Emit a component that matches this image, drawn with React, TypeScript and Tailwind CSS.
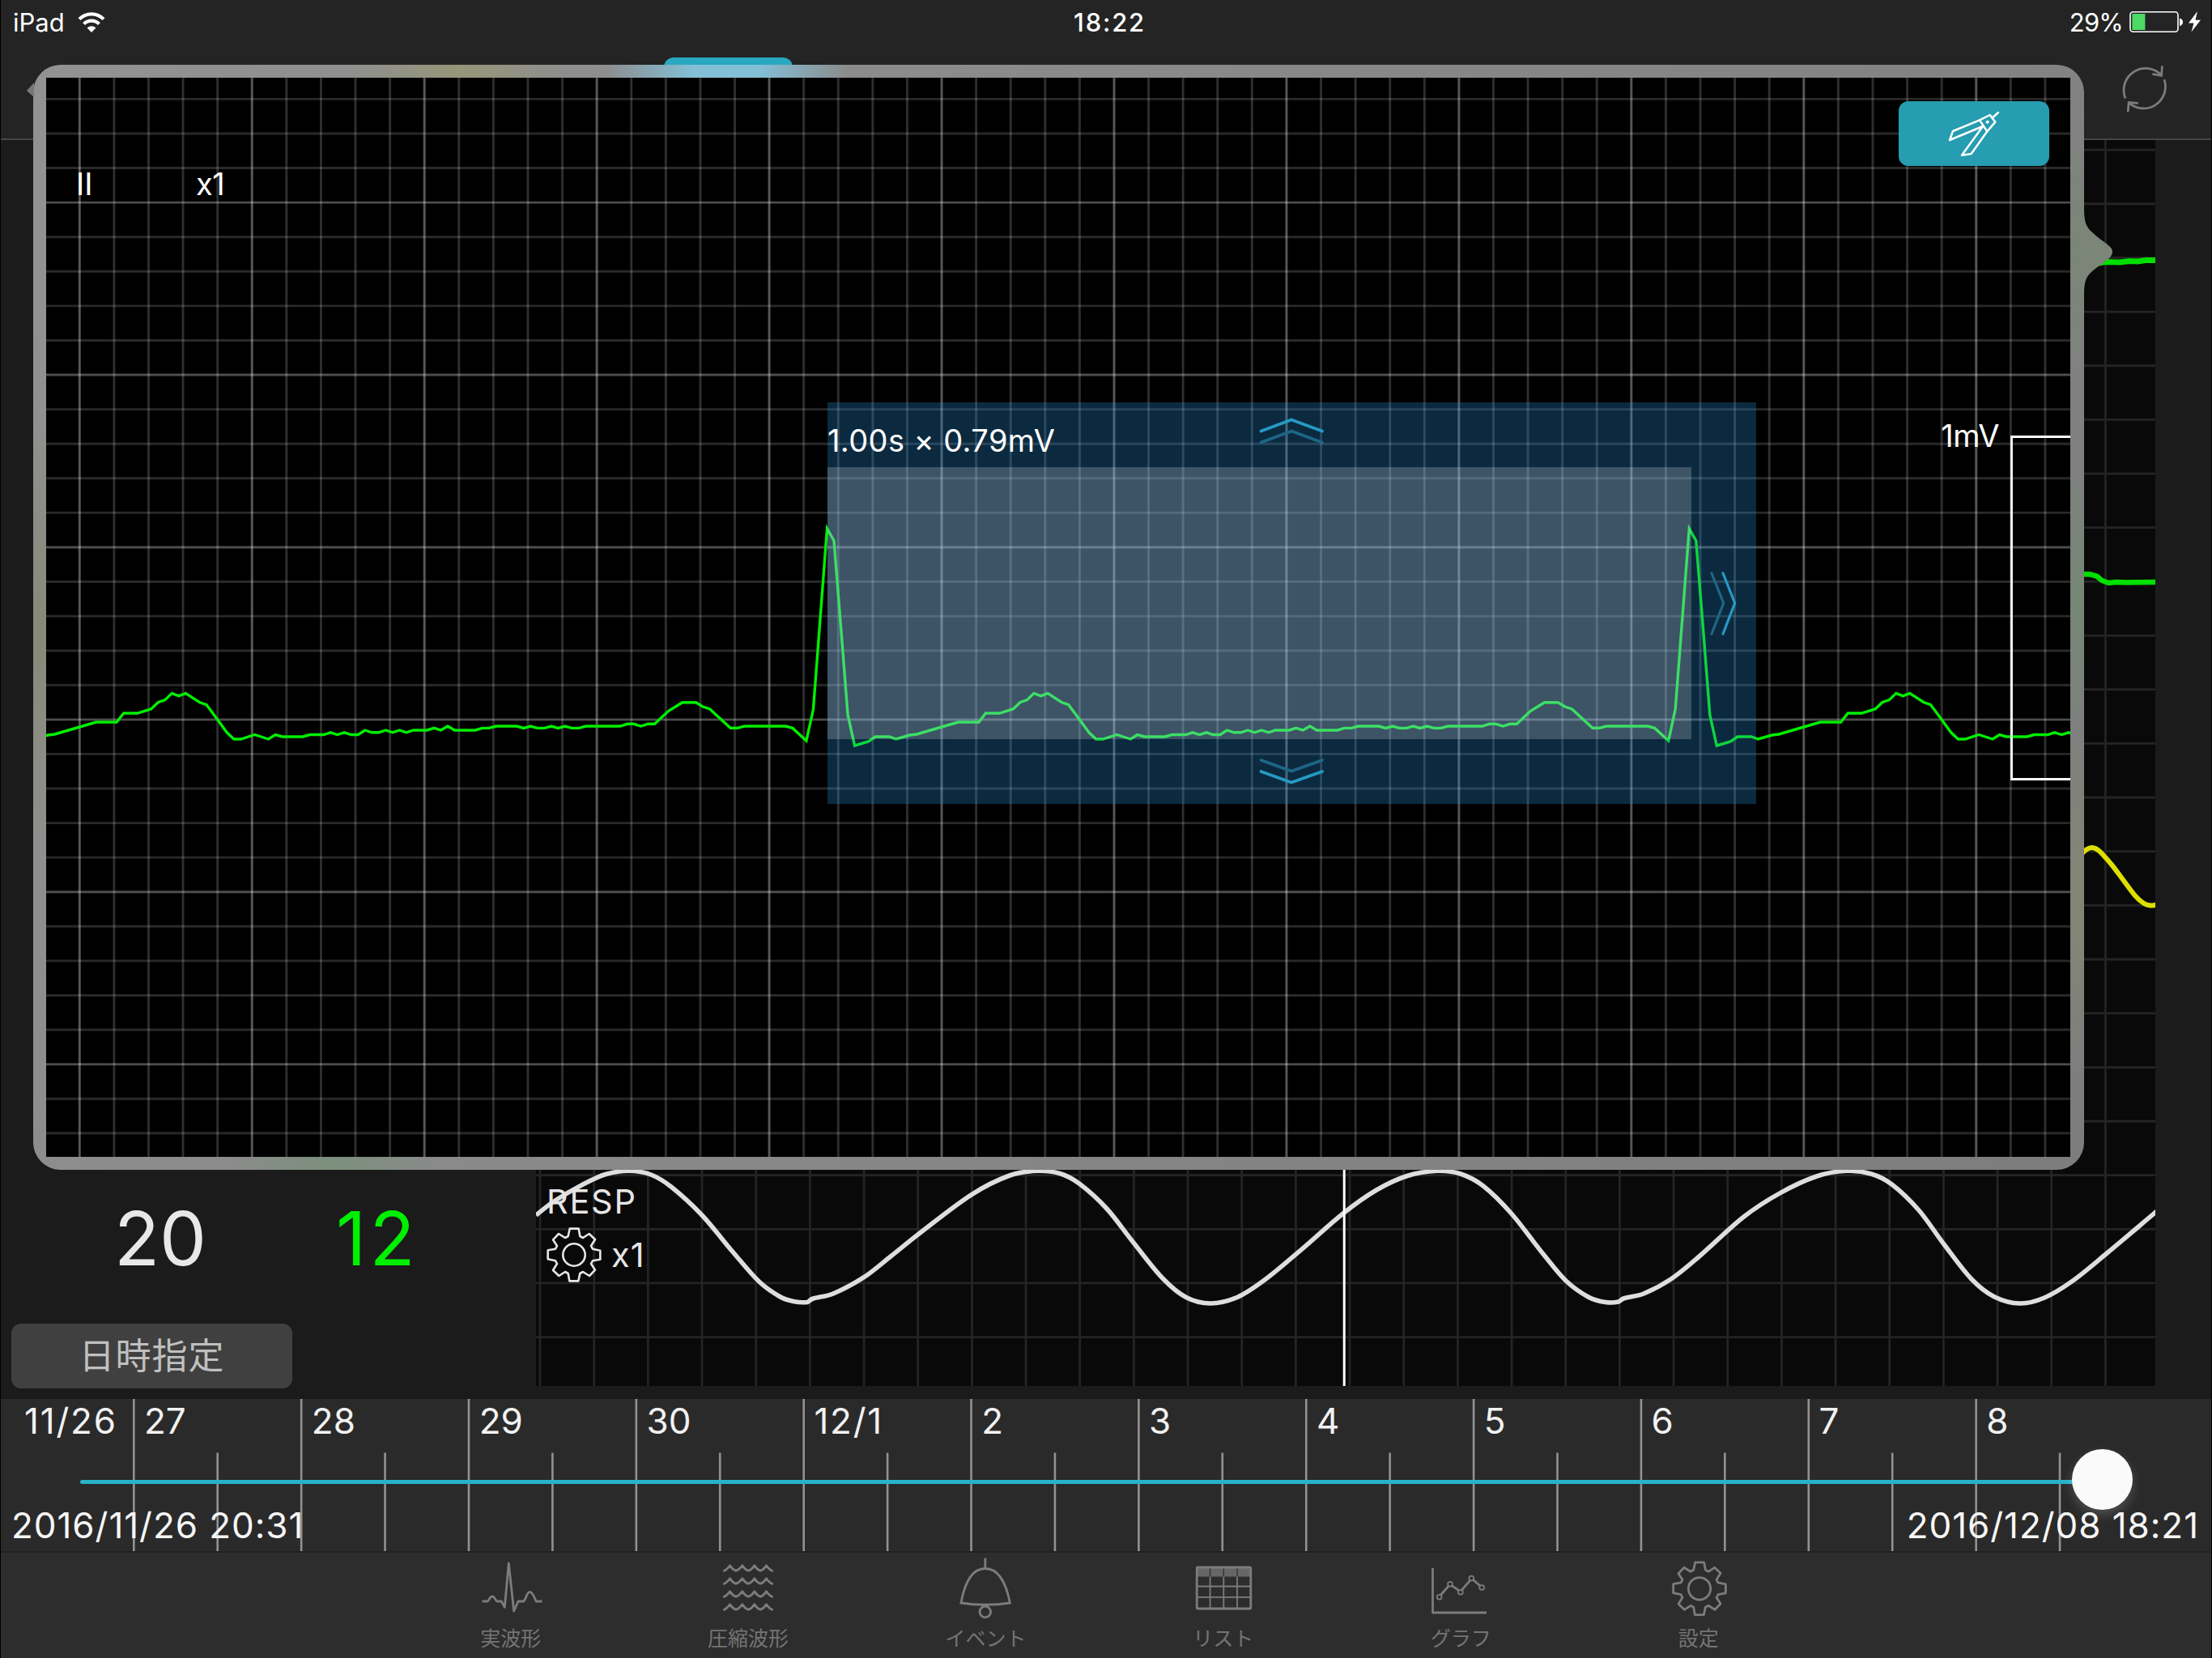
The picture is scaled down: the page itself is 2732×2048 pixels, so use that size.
import type { ReactNode } from 'react';

const LANE = { w: 2000, h: 1539 };
const CHART = { w: 2500, h: 1333 };

// One beat of lead II as [sample, y] pairs, sample 0 is the R peak
const BEAT: [number, number][] = [
  [0, 653], [1, 668], [2, 774], [3, 883], [4, 921], [6, 916], [7, 910], [9, 910], [10, 913], [12, 908],
  [13, 907], [19, 892], [22, 892], [23, 881], [25, 881], [27, 875.7], [28, 867.5], [29, 864.6], [30, 856.4], [31, 859.6],
  [32, 856.4], [34, 867.5], [35, 870.4], [36, 881.8], [38, 905], [39, 913], [40, 913], [42, 907.5], [44, 913], [45, 907.5],
  [46, 910], [49, 910], [50, 907.5], [52, 907.5], [53, 904.8], [54, 907.5], [55, 904.8], [56, 907.5], [57, 907.5], [58, 902],
  [59, 904.8], [60, 904.8], [61, 902], [62, 904.8], [63, 902], [64, 904.8], [65, 902], [67, 902], [68, 899.4], [69, 902],
  [70, 897], [71, 902], [74, 902], [75, 899.4], [76, 899.4], [77, 897], [80, 897], [81, 899.4], [82, 897], [83, 899.4],
  [84, 899.4], [85, 897], [86, 899.4], [87, 897], [88, 899.4], [89, 899.4], [90, 897], [95, 897], [96, 894.3], [97, 894.3],
  [98, 897], [99, 894.3], [100, 894.3], [102, 878.3], [104, 867.7], [106, 867.7], [107, 873], [108, 875.7], [109, 883.7], [111, 899.3],
  [112, 899.3], [113, 897], [119, 897], [120, 899.4], [122, 915], [123, 876],
];

const RESP: [number, number][] = [
  [662, 1501], [684, 1484], [720, 1463], [748, 1450.5], [777, 1446.3], [804, 1451], [829, 1466], [867, 1501], [905.6, 1547], [937.5, 1583],
  [963, 1601.5], [980, 1607.5], [997, 1608.5], [1003, 1604.5], [1029, 1598], [1067, 1577.7], [1100, 1552], [1133.7, 1525], [1200, 1475.6], [1247, 1452],
  [1281, 1446.3], [1309, 1449.5], [1333, 1462], [1367, 1493], [1400, 1535], [1436, 1579], [1465, 1602.5], [1495, 1610], [1528, 1602.5], [1562.5, 1580.6],
  [1608.4, 1542.6], [1660, 1498], [1700, 1470], [1738, 1452.5], [1775, 1446.3], [1804, 1450], [1832, 1465], [1866.7, 1499], [1906, 1549], [1934, 1582],
  [1962.5, 1602.5], [1983, 1608.5], [1999, 1608], [2005, 1604], [2030, 1598], [2063.7, 1580], [2097.5, 1553], [2153.7, 1503], [2198.7, 1473.6], [2243.7, 1453],
  [2280, 1446.3], [2311, 1450], [2336.6, 1463], [2370, 1495], [2401, 1537], [2435, 1580], [2463, 1601.7], [2495, 1610], [2525, 1603], [2558.7, 1583],
  [2601, 1549], [2664, 1496],
];

const PLETH: [number, number][] = [
  [2568, 1058], [2576, 1050], [2584, 1047], [2592.5, 1051], [2608, 1068], [2621.6, 1086], [2637.6, 1107], [2648, 1116], [2656, 1118.5], [2664, 1117.5],
];

const DAYS = ['27', '28', '29', '30', '12/1', '2', '3', '4', '5', '6', '7', '8'];

const range = (n: number) => Array.from({ length: n }, (_, i) => i);

function smooth(pts: [number, number][]) {
  const slope = (i: number) => {
    const a = pts[Math.max(i - 1, 0)];
    const b = pts[Math.min(i + 1, pts.length - 1)];
    return (b[1] - a[1]) / (b[0] - a[0]);
  };
  let d = `M${pts[0][0]} ${pts[0][1]}`;
  for (let i = 0; i < pts.length - 1; i++) {
    const [x1, y1] = pts[i];
    const [x2, y2] = pts[i + 1];
    const dx = (x2 - x1) / 3;
    d += ` C${x1 + dx} ${y1 + slope(i) * dx} ${x2 - dx} ${y2 - slope(i + 1) * dx} ${x2} ${y2}`;
  }
  return d;
}

const ecgPoints = [-1, 0, 1]
  .flatMap(beat => BEAT.map(([s, y]) => `${(1021.5 + (beat * 125 + s) * 8.518).toFixed(1)},${y}`))
  .join(' ');

const GEAR = (() => {
  let quarter = [[17, -97], [22, -69], [33, -63], [56, -78], [78, -57], [63, -33], [69, -22], [97, -16]];
  const out: string[] = [];
  for (let i = 0; i < 4; i++) {
    out.push(...quarter.map(([x, y]) => `${x / 3},${y / 3}`));
    quarter = quarter.map(([x, y]) => [-y, x]);
  }
  return out.join(' ');
})();

const GearShape = () => (
  <g strokeLinejoin="round">
    <polygon points={GEAR} />
    <circle r="13.7" />
  </g>
);

function StatusBar() {
  return (
    <div className="grid h-[54px] grid-cols-3 items-center text-[31px] leading-none text-white">
      <div className="flex items-center pl-[15px]">
        <span>iPad</span>
        <svg width="34" height="27" viewBox="0 0 34 27" className="ml-[16px]" fill="none" stroke="#fff" strokeWidth="4.2">
          <path d="M2 9.6 A21 21 0 0 1 32 9.6" />
          <path d="M7.6 15.6 A13.2 13.2 0 0 1 26.4 15.6" />
          <path d="M17 26 L11.6 20.4 A7.6 7.6 0 0 1 22.4 20.4 Z" fill="#fff" stroke="none" />
        </svg>
      </div>
      <div className="pl-[9px] text-center font-medium tracking-[1.8px]">18:22</div>
      <div className="flex items-center justify-end pr-[11px]">
        <span className="tracking-[-0.8px]">29%</span>
        <svg width="90" height="28" viewBox="0 0 90 28" className="ml-[8px]">
          <rect x="1" y="1.7" width="59" height="24.6" rx="3.5" fill="none" stroke="#fff" strokeWidth="1.6" />
          <rect x="3.4" y="4" width="16" height="20" fill="#4cd964" />
          <path d="M62 9.5 q4 1 4 4.8 t-4 4.8 Z" fill="#fff" />
          <path d="M84 1 L73 15.5 h6.5 L76.5 26.5 L88 11.8 h-6.5 Z" fill="#fff" />
        </svg>
      </div>
    </div>
  );
}

function Header() {
  return (
    <header className="h-[173px] shrink-0 border-b-2 border-[#454545] bg-[#242424]">
      <StatusBar />
      <div className="flex justify-between pl-[819px] pr-[50px] pt-[17px]">
        <div className="h-[40px] w-[159px] rounded-t-[12px] bg-[#29a8c2]" />
        <svg width="64" height="64" viewBox="2617 77 64 64" className="mt-[6px]" fill="none" stroke="#7b7b7b" strokeWidth="2.8" strokeLinecap="round">
          <path d="M2624.6 120.5 A27 27 0 0 1 2669.4 92.6 M2670.4 82.5 L2669.6 93.4 L2659.4 91.6" />
          <path d="M2673.4 99.4 A27 27 0 0 1 2629.4 127 M2639.8 127.4 L2629.2 126.6 L2628.3 137" />
        </svg>
      </div>
    </header>
  );
}

function WaveLane() {
  return (
    <div className="relative h-[1539px] w-[2000px] overflow-hidden bg-[#090909]">
      <svg width={LANE.w} height={LANE.h} viewBox="662 173 2000 1539" className="absolute inset-0" fill="none">
        <g stroke="#242424" strokeWidth="2.8">
          {range(30).map(i => <path key={i} d={`M${667 + i * 66.67} 173 V1712`} />)}
          {range(23).map(i => <path key={i} d={`M662 ${185.1 + i * 66.66} H2662`} />)}
        </g>
        <path d="M2570 327 L2592 325 L2600 323.5 L2618 324 L2630 322.5 L2640 323 L2650 321.5 L2664 321.5" stroke="#00e000" strokeWidth="7" />
        <path d="M2568 709 L2582 709.5 L2590 712 L2596 717 L2604 720 L2614 719 L2625 719.5 L2664 719" stroke="#00e000" strokeWidth="6.5" />
        <path d={smooth(PLETH)} stroke="#dede00" strokeWidth="6" />
        <path d={smooth(RESP)} stroke="#dedede" strokeWidth="5.6" />
        <path d="M1660.2 173 V1712" stroke="#fff" strokeWidth="3" />
      </svg>
      <div className="relative flex flex-col pl-[12px] pt-[1290px] text-[41.5px] leading-[42px] text-[#e6e6e6]">
        <span className="pl-[1px] tracking-[1.7px]">RESP</span>
        <div className="mt-[10px] flex items-center">
          <svg width="70" height="70" viewBox="-35 -35 70 70" fill="none" stroke="#e6e6e6" strokeWidth="2.6">
            <GearShape />
          </svg>
          <span className="ml-[11px] tracking-[1px]">x1</span>
        </div>
      </div>
    </div>
  );
}

function MainArea() {
  return (
    <main className="flex h-[1555px] shrink-0 bg-[#1b1b1b]">
      <div className="flex w-[661px] flex-col justify-end pb-[13px]">
        <div className="flex text-[92px] leading-[92px]">
          <span className="w-[275px] pl-[140px] text-[#e8e8e8]">20</span>
          <span className="pl-[139px] tracking-[4px] text-[#00ee00]">12</span>
        </div>
        <button className="ml-[13px] mt-[59px] h-[80px] w-[347px] rounded-[12px] bg-[#404040] text-[44px] leading-none tracking-[1px] text-[#c0c0c0]">
          日時指定
        </button>
      </div>
      <WaveLane />
    </main>
  );
}

function Timeline() {
  return (
    <section className="relative h-[188px] shrink-0 overflow-hidden bg-[#2a2a2a]">
      <svg width="2730" height="188" viewBox="1 1728 2730 188" className="absolute inset-0" stroke="#929292" strokeWidth="2.6">
        {range(12).map(i => <path key={i} d={`M${165.3 + i * 206.85} 1728 V1916`} />)}
        {range(12).map(i => <path key={i} d={`M${268.7 + i * 206.85} 1794.5 V1916`} />)}
      </svg>
      <div className="relative flex pt-[5px] text-[44px] leading-[44px] tracking-[1.8px] text-[#f2f2f2]">
        <span className="w-[177px] shrink-0 pl-[29px]">11/26</span>
        {DAYS.map(day => (
          <span key={day} className={day.length === 2 ? 'w-[206.85px] shrink-0 tracking-normal' : 'w-[206.85px] shrink-0'}>{day}</span>
        ))}
      </div>
      <div className="relative ml-[98px] mt-[51px] h-[5px] w-[2480px] rounded-full bg-[#28b2c9]" />
      <div className="absolute left-[2558px] top-[62px] size-[75px] rounded-full bg-[#fafafa] shadow-[0_6px_14px_rgba(255,255,255,0.18)]" />
      <div className="relative mt-[29px] flex justify-between pl-[13px] pr-[15px] text-[44px] leading-[44px] tracking-[0.95px] text-[#f6f6f6]">
        <span>2016/11/26 20:31</span>
        <span>2016/12/08 18:21</span>
      </div>
    </section>
  );
}

function Tab({ label, children }: { label: string; children: ReactNode }) {
  return (
    <div className="flex w-[293.4px] flex-col items-center">
      <svg width="80" height="84" viewBox="0 0 80 84" fill="none" stroke="#7c7c7c" strokeWidth="2.8" strokeLinejoin="round">
        {children}
      </svg>
      <span className="mt-[9px] text-[25px] leading-[26px] text-[#747474]">{label}</span>
    </div>
  );
}

function TabBar() {
  return (
    <nav className="flex h-[132px] shrink-0 border-t-2 border-[#212121] bg-[#2d2d2d] pl-[483px]">
      <Tab label="実波形">
        <path d="M4.5 60 H11 C14 58 13.5 54 17 54 S20 58 23 60 H28.3 L32.3 67.3 L37.3 13 L43.7 72 L49 60 H55.7 C59 57 59.5 48.3 63.3 48.3 S68.5 55 71.3 60 H78.5" />
      </Tab>
      <Tab label="圧縮波形">
        {range(4).map(i => (
          <path
            key={i}
            transform={`translate(0 ${i * 16})`}
            d="M9.2 22.7 Q14 21 17.5 15.7 Q20.5 20.5 25 22.3 Q29.5 20.5 32.8 15.7 Q35.8 20.5 40.2 22.3 Q44.8 20.5 47.8 15.7 Q50.8 20.5 55.2 22.3 Q59.5 20.5 62.5 15.7 Q66 21 70.8 22.7"
          />
        ))}
      </Tab>
      <Tab label="イベント">
        <path d="M39.8 6.5 V19.5" />
        <path d="M9.9 62 C14.5 37 24 19.5 39.8 19.5 S65.5 37 70.4 62 Q40 66.5 9.9 62 Z" strokeLinejoin="miter" />
        <circle cx="39.8" cy="73" r="6.8" />
      </Tab>
      <Tab label="リスト">
        <rect x="7" y="17.5" width="67" height="12" fill="#666" stroke="none" />
        <path d="M23.6 17.5 V29.5 M40.3 17.5 V29.5 M57 17.5 V29.5" stroke="#333" strokeWidth="1.4" />
        <rect x="7.2" y="18" width="66.6" height="51" rx="1" />
        <path d="M23.6 29.5 V69 M40.3 29.5 V69 M57 29.5 V69 M7 41.5 H74 M7 54.8 H74" strokeWidth="1.8" />
      </Tab>
      <Tab label="グラフ">
        <path d="M5.5 19 V74 H72" />
        <path d="M15.5 52 L25.3 41 M29.4 40.8 L37.6 46.4 M41.6 45.9 L51.7 34.2 M55.6 33.5 L63.8 40.6" />
        <g strokeWidth="1.8">
          <circle cx="13.7" cy="54.7" r="2.9" />
          <circle cx="27" cy="38.7" r="2.9" />
          <circle cx="39.9" cy="48.7" r="2.9" />
          <circle cx="53.3" cy="31.5" r="2.9" />
          <circle cx="66.2" cy="43" r="2.9" />
        </g>
      </Tab>
      <Tab label="設定">
        <g transform="translate(41 44.3)">
          <GearShape />
        </g>
      </Tab>
    </nav>
  );
}

function EcgChart() {
  return (
    <svg width={CHART.w} height={CHART.h} viewBox="57 96 2500 1333" className="absolute inset-0" fill="none">
      <g stroke="#fff" strokeWidth="2.9">
        {range(31).map(i => (
          <path key={i} d={`M57 ${122.4 + i * 42.58} H2557`} strokeOpacity={i % 5 === 3 ? 0.3 : 0.16} />
        ))}
        {range(58).map(i => (
          <path key={i} d={`M${98.3 + i * 42.59} 96 V1429`} strokeOpacity={i % 5 === 0 ? 0.34 : 0.18} />
        ))}
      </g>
      <polyline points={ecgPoints} stroke="#00f000" strokeWidth="3.4" strokeLinejoin="miter" />
      <path d="M2558 539.5 H2484.5 V962.5 H2558" stroke="#fff" strokeWidth="2.8" />
    </svg>
  );
}

function Caliper() {
  return (
    <div className="absolute left-[965px] top-[401px] h-[496px] w-[1147px] bg-[rgba(43,150,225,0.28)] pt-[80px]">
      <div className="h-[336px] w-[1067px] bg-white/20" />
      <span className="absolute left-0 top-[27px] whitespace-nowrap text-[38px] leading-[40px] tracking-[0.4px] text-white">1.00s × 0.79mV</span>
      <svg width="1147" height="496" viewBox="1022 497 1147 496" className="absolute inset-0" fill="none" strokeWidth="3.8" strokeLinecap="round">
        <path d="M1557.5 546.5 L1595 532.5 L1633 546.5" stroke="#1d6785" />
        <path d="M1557.5 532.5 L1595 518.5 L1633 532.5" stroke="#2699c4" />
        <path d="M1557.5 939 L1595 952.5 L1633 939" stroke="#1d6785" />
        <path d="M1557.5 953 L1595 966.5 L1633 953" stroke="#2699c4" />
        <path d="M2114 708 L2128.7 745 L2114 783" stroke="#1d6785" strokeWidth="3.2" />
        <path d="M2128 708 L2142.7 745 L2128 783" stroke="#2699c4" strokeWidth="3.2" />
      </svg>
    </div>
  );
}

function CaliperButton() {
  return (
    <button className="absolute left-[2288px] top-[29px] flex h-[80px] w-[186px] justify-center rounded-[12px] bg-[#269db0] pt-[5px]">
      <svg width="90" height="70" viewBox="0 0 270 210" className="ml-[4px]" fill="none" stroke="#fff" strokeWidth="7.5" strokeLinejoin="round" strokeLinecap="round">
        <path d="M219 27 L199 45" />
        <path d="M150 55 L188 36 L208 62 L178 97 Z" />
        <path d="M150 55 L51 96 L39 129 L162 78" />
        <path d="M162 78 L84 185 L119 180 L178 97" />
        <circle cx="179" cy="62" r="6" fill="#fff" stroke="none" />
      </svg>
    </button>
  );
}

function WavePopover() {
  return (
    <div className="absolute left-[40px] top-[80px]">
      <svg width="9" height="20" viewBox="0 0 9 20" className="absolute left-[-8px] top-[22px]">
        <path d="M9 0 L0 10 L9 18 Z" fill="#777" />
      </svg>
      <svg width="38" height="130" viewBox="0 0 38 130" className="absolute left-[2532px] top-[166px]">
        <path d="M0 0 L1 8 C1 28 3 33 10 40 C18 48 27 53 32 58 Q36 61 36 65 Q36 69 32 73 C27 78 18 83 10 90 C3 97 1 102 1 122 L0 130 Z" fill="#7b8578" />
      </svg>
      <div className="h-[1365px] w-[2533px] rounded-[34px] bg-[#858585] bg-[radial-gradient(circle_at_525px_8px,#969679_0,transparent_130px),radial-gradient(circle_at_856px_8px,#83bfd6_0,#83bfd6_40px,transparent_150px),radial-gradient(circle_at_0_700px,#868a77_0,transparent_260px),radial-gradient(circle_at_370px_1360px,#7b8f7c_0,transparent_130px),radial-gradient(circle_at_2525px_230px,#7a8677_0,transparent_180px),radial-gradient(circle_at_2525px_660px,#758775_0,transparent_180px),radial-gradient(circle_at_2525px_1030px,#858575_0,transparent_220px),linear-gradient(120deg,#929292,#7d7d7d)] pl-[16px] pt-[16px]">
        <div className="relative h-[1333px] w-[2500px] overflow-hidden bg-black text-[38px] leading-[40px] text-white">
          <EcgChart />
          <div className="relative flex gap-[130px] pl-[37px] pt-[111px]">
            <span className="w-[18px]">II</span>
            <span className="tracking-[-0.5px]">x1</span>
          </div>
          <span className="absolute right-[88px] top-[422px] tracking-[-0.4px]">1mV</span>
          <Caliper />
          <CaliperButton />
        </div>
      </div>
    </div>
  );
}

export default function App() {
  return (
    <div className="relative flex h-[2048px] w-[2732px] flex-col overflow-hidden border-x border-black bg-[#1b1b1b] font-['Inter','Noto_Sans_CJK_JP',sans-serif]">
      <Header />
      <MainArea />
      <Timeline />
      <TabBar />
      <WavePopover />
    </div>
  );
}
